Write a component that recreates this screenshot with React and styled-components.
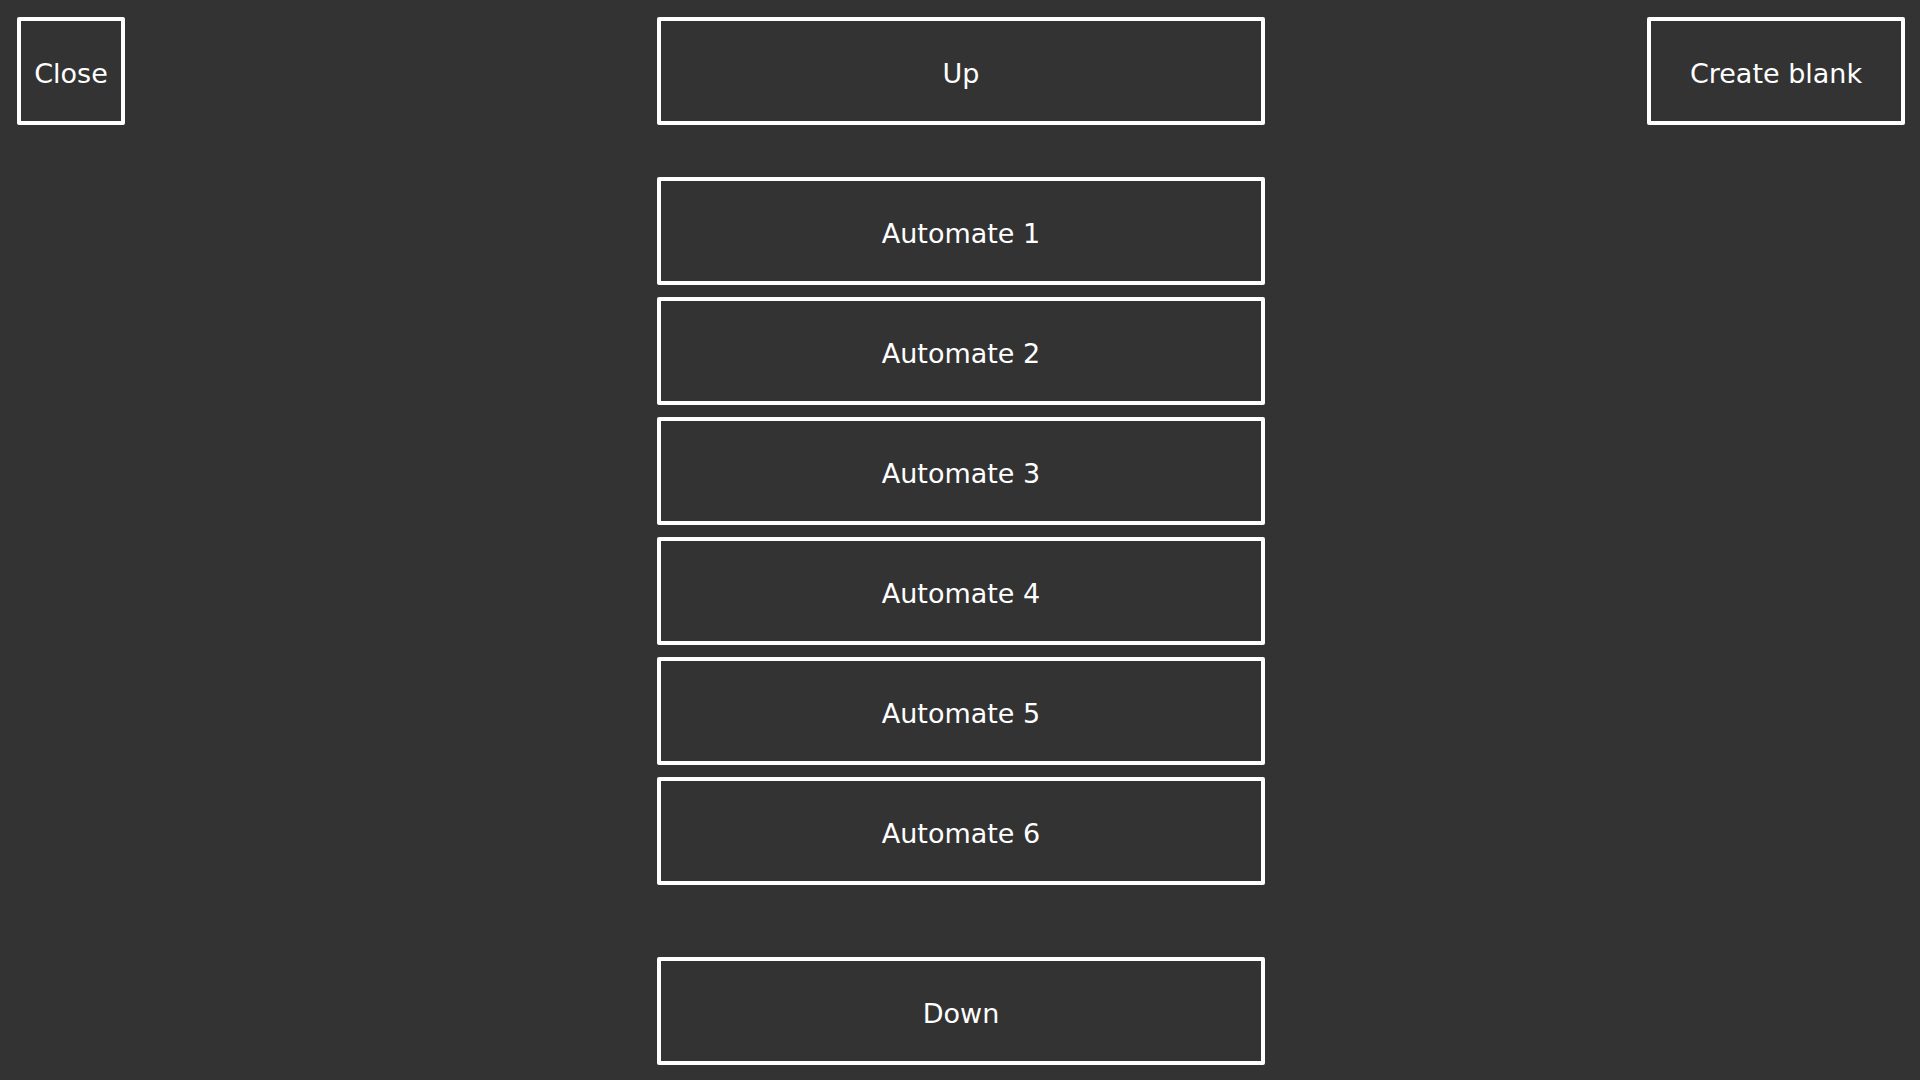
import React from 'react';
import styled, {createGlobalStyle} from 'styled-components';

const GlobalStyle = createGlobalStyle`
  html, body {
    margin: 0;
    padding: 0;
    background: #333333;
  }
`;

const Page = styled.div`
  width: 1920px;
  height: 1080px;
  box-sizing: border-box;
  padding: 17px 15px 0 17px;
  display: grid;
  grid-template-columns: 1fr 608px 1fr;
  align-items: start;
  background: #333333;
  font-family: "Comic Sans MS", "DejaVu Sans", sans-serif;
  color: #ffffff;
`;

const Button = styled.button`
  box-sizing: border-box;
  height: 108px;
  width: ${({width}) => width || '100%'};
  justify-self: ${({align}) => align || 'stretch'};
  padding: 4px 0 0;
  background: transparent;
  border: 4px solid #ffffff;
  border-radius: 2px;
  color: #ffffff;
  font-family: inherit;
  font-size: 27px;
  display: flex;
  align-items: center;
  justify-content: center;
  cursor: pointer;
`;

const Column = styled.div`
  display: flex;
  flex-direction: column;
`;

const List = styled.div`
  display: flex;
  flex-direction: column;
  gap: 12px;
  margin: 52px 0 72px;
`;

const automates = [1, 2, 3, 4, 5, 6];

const App = () => (
  <>
    <GlobalStyle />
    <Page>
      <Button width="108px" align="start">Close</Button>
      <Column>
        <Button>Up</Button>
        <List>
          {automates.map(n => (
            <Button key={n}>Automate {n}</Button>
          ))}
        </List>
        <Button>Down</Button>
      </Column>
      <Button width="258px" align="end">Create blank</Button>
    </Page>
  </>
);

export default App;
